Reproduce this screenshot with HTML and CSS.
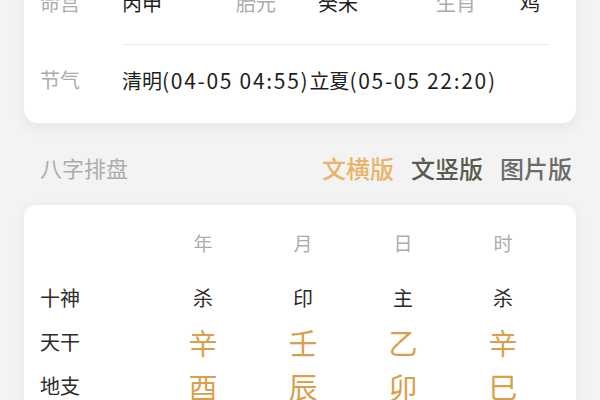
FILE: index.html
```html
<!DOCTYPE html>
<html lang="zh-CN">
<head>
<meta charset="utf-8">
<link rel="stylesheet" href="styles.css">
</head>
<body>
<div class="page">
  <div class="card info">
    <div class="info-grid">
      <span class="lbl">命宫</span><span class="val">丙申</span>
      <span class="lbl">胎元</span><span class="val">癸未</span>
      <span class="lbl">生肖</span><span class="val">鸡</span>
    </div>
    <div class="divider"></div>
    <div class="jq">
      <span class="lbl">节气</span><span class="val">清明<span class="num">(04-05 04:55)</span>立夏<span class="num">(05-05 22:20)</span></span>
    </div>
  </div>

  <div class="section-head">
    <span class="sec-title">八字排盘</span>
    <div class="tabs">
      <span class="tab active">文横版</span>
      <span class="tab olive">文竖版</span>
      <span class="tab grey">图片版</span>
    </div>
  </div>

  <div class="card bazi">
    <div class="brow head">
      <span></span><span>年</span><span>月</span><span>日</span><span>时</span>
    </div>
    <div class="brow">
      <span class="rl">十神</span><span>杀</span><span>印</span><span>主</span><span>杀</span>
    </div>
    <div class="brow big">
      <span class="rl">天干</span><span>辛</span><span>壬</span><span>乙</span><span>辛</span>
    </div>
    <div class="brow big">
      <span class="rl">地支</span><span>酉</span><span>辰</span><span>卯</span><span>巳</span>
    </div>
  </div>
</div>
</body>
</html>
```

FILE: styles.css
```css
html, body {
  margin: 0;
  padding: 0;
  background: #f3f3f3;
  font-family: "Noto Sans CJK SC", "Noto Sans", sans-serif;
  overflow: hidden;
}
.page {
  margin-top: -31px;
  padding: 0 24px;
}
.card {
  background: #fff;
  border-radius: 14px;
  box-shadow: 0 4px 14px rgba(0,0,0,0.06);
}
.info {
  padding: 20px 26px 28px 16px;
}
.info-grid {
  display: grid;
  grid-template-columns: 82px 114px 82px 118px 84px 1fr;
  font-size: 20px;
  line-height: 28px;
  padding-bottom: 27px;
}
.lbl { color: #ababab; }
.val { color: #1e1e1e; }
.divider {
  height: 1px;
  background: #ececec;
  margin-left: 82px;
}
.jq {
  display: grid;
  grid-template-columns: 82px 1fr;
  font-size: 20px;
  line-height: 28px;
  padding-top: 21px;
}
.num {
  font-size: 21px;
  letter-spacing: 1.7px;
}
.section-head {
  display: flex;
  justify-content: space-between;
  align-items: center;
  margin-top: 28px;
  padding: 0 4px 0 16px;
  height: 32px;
}
.sec-title {
  font-size: 22px;
  color: #adadad;
}
.tabs {
  display: flex;
  gap: 17px;
  font-size: 24px;
  font-weight: 500;
}
.tab.active { color: #e9b466; }
.tab.olive { color: #575b4c; }
.tab.grey { color: #6b6b6b; }
.bazi {
  margin-top: 22px;
  padding: 24px 0 20px 16px;
  border-radius: 12px;
}
.brow {
  display: grid;
  grid-template-columns: 113px repeat(4, 100px);
  font-size: 20px;
  line-height: 44px;
  color: #2a2a2a;
}
.brow span { text-align: center; }
.brow span.rl { text-align: left; }
.brow.head {
  line-height: 28px;
  color: #adadad;
  font-size: 19px;
  margin-bottom: 19px;
}
.brow.big span { color: #d9a04c; font-size: 29px; }
.brow.big span.rl { color: #2a2a2a; font-size: 20px; }
```
